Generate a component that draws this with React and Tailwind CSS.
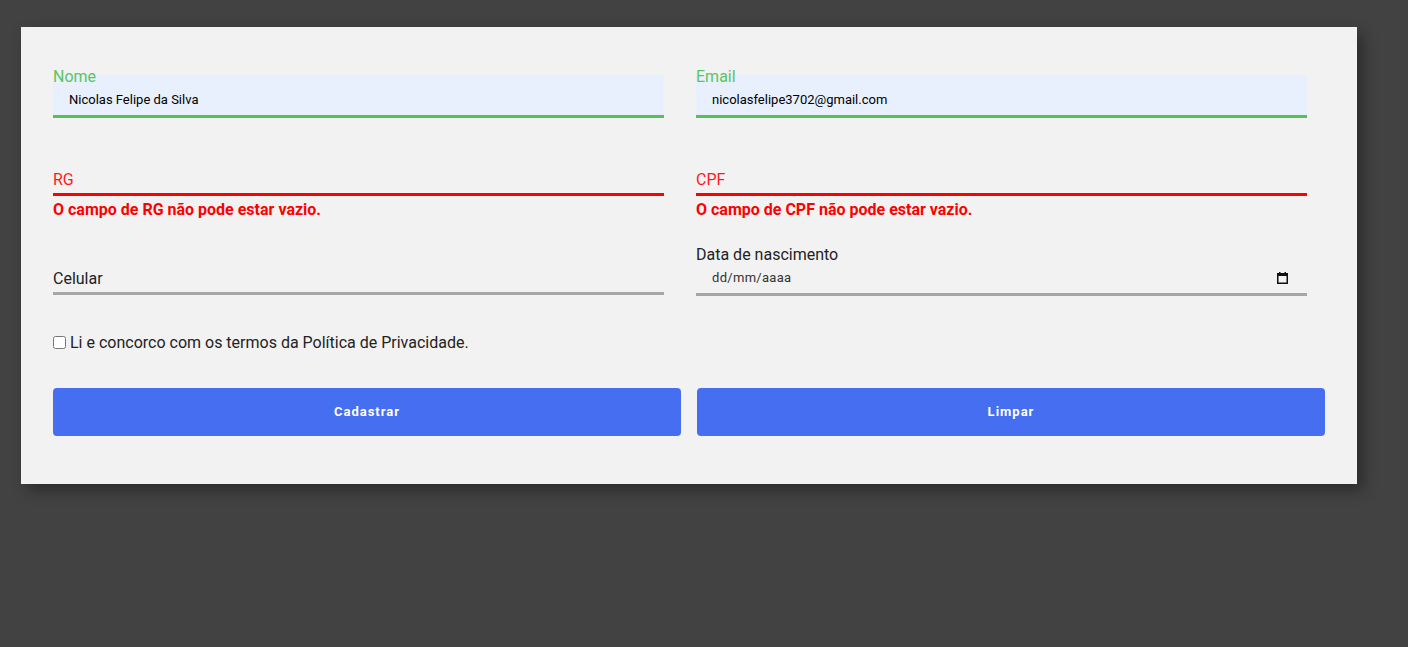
import React from 'react';

const CalendarIcon = () => (
  <svg width="11" height="12" viewBox="0 0 11 12" className="shrink-0">
    <rect x="0.75" y="1.75" width="9.5" height="9.5" fill="none" stroke="#111" strokeWidth="1.5" />
    <rect x="0" y="1" width="11" height="3" fill="#111" />
    <rect x="2" y="0" width="1.5" height="2" fill="#111" />
    <rect x="7.5" y="0" width="1.5" height="2" fill="#111" />
  </svg>
);

const Field = ({ label, value, state, error }) => {
  const filled = !!value;
  const line =
    state === 'ok' ? 'border-[#55c155]' : state === 'error' ? 'border-[#ff0000]' : 'border-[#a6a6a6]';
  const labelColor =
    state === 'ok' ? 'text-[#5cc55c]' : state === 'error' ? 'text-[#ff1a1a]' : 'text-[#222]';

  return (
    <div>
      <div className="relative w-[611px]">
        <input
          readOnly
          value={value || ''}
          className={`block w-full h-[43px] pt-[9px] pl-4 text-[13px] text-black outline-none border-0 border-b-[3px] ${line} ${filled ? 'bg-[#e8f0fe]' : 'bg-transparent'}`}
        />
        <label
          className={`absolute left-0 text-[16px] leading-[19px] ${labelColor} ${filled ? '-top-2' : 'top-[17px]'}`}
        >
          {label}
        </label>
      </div>
      {error && (
        <p className="mt-[7px] text-[16px] leading-[14px] font-bold text-[#ff0000]">{error}</p>
      )}
    </div>
  );
};

export default function App() {
  return (
    <div className="min-h-screen bg-[#424242] pl-[21px] pt-[27px] font-['Roboto',sans-serif]">
      <div className="w-[1336px] bg-[#f2f2f2] px-8 pt-[48px] pb-[48px] shadow-[6px_6px_14px_rgba(0,0,0,0.35)]">
        <div className="grid grid-cols-2 gap-x-[14px] gap-y-[35px]">
          <Field label="Nome" value="Nicolas Felipe da Silva" state="ok" />
          <Field label="Email" value="nicolasfelipe3702@gmail.com" state="ok" />
          <Field label="RG" state="error" error="O campo de RG não pode estar vazio." />
          <Field label="CPF" state="error" error="O campo de CPF não pode estar vazio." />
          <Field label="Celular" />
          <div className="relative w-[611px] mt-px">
            <div className="flex items-center justify-between h-[43px] pt-[9px] pl-4 pr-[19px] border-b-[3px] border-[#a6a6a6]">
              <span className="text-[13px] text-[#333] tracking-[0.3px]">dd/mm/aaaa</span>
              <CalendarIcon />
            </div>
            <label className="absolute left-0 -top-2 text-[16px] leading-[19px] text-[#222]">
              Data de nascimento
            </label>
          </div>
        </div>

        <label className="mt-[37px] flex items-center text-[16px] leading-[19px] text-[#222]">
          <input type="checkbox" className="m-0 mr-[4px] w-[13px] h-[13px]" />
          Li e concorco com os termos da Política de Privacidade.
        </label>

        <div className="mt-[36px] grid grid-cols-2 gap-4">
          <button className="h-[48px] rounded bg-[#466ef0] text-white text-[13px] font-bold tracking-[1px]">
            Cadastrar
          </button>
          <button className="h-[48px] rounded bg-[#466ef0] text-white text-[13px] font-bold tracking-[1px]">
            Limpar
          </button>
        </div>
      </div>
    </div>
  );
}
